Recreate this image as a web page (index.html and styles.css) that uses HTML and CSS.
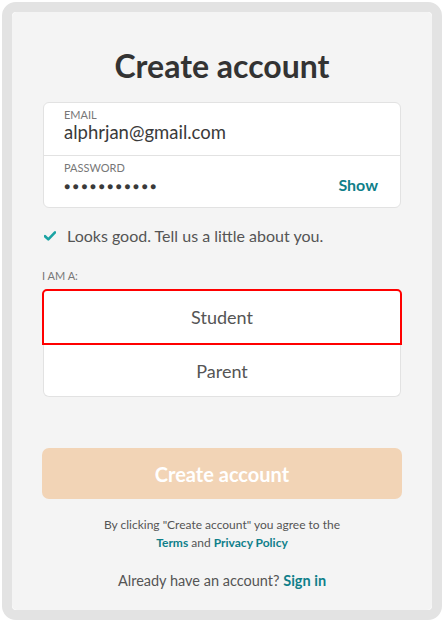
FILE: index.html
```html
<!DOCTYPE html>
<html lang="en">
<head>
    <meta charset="UTF-8">
    <meta name="viewport" content="width=device-width, initial-scale=1.0">
    <title>Create account</title>
    <link rel="stylesheet" href="styles.css">
</head>
<body>

<div class="frame">
    <div class="panel">
        <h1>Create account</h1>

        <div class="fields">
            <div class="field">
                <span class="label">EMAIL</span>
                <span class="value">alphrjan@gmail.com</span>
            </div>
            <div class="field field-pass">
                <div class="pass-col">
                    <span class="label">PASSWORD</span>
                    <span class="value dots">&#9679;&#9679;&#9679;&#9679;&#9679;&#9679;&#9679;&#9679;&#9679;&#9679;&#9679;</span>
                </div>
                <a class="show" href="#">Show</a>
            </div>
        </div>

        <p class="ok">
            <svg width="12" height="10" viewBox="0 0 12 10"><path d="M1 5.2 L4.3 8.4 L11 1.4" fill="none" stroke="#1aa3a3" stroke-width="2.6" stroke-linecap="round" stroke-linejoin="round"/></svg>
            Looks good. Tell us a little about you.
        </p>

        <span class="label role-label">I AM A:</span>
        <div class="roles">
            <button class="role role-active">Student</button>
            <button class="role">Parent</button>
        </div>

        <button class="submit">Create account</button>

        <p class="terms">By clicking "Create account" you agree to the<br>
            <a href="#">Terms</a> and <a href="#">Privacy Policy</a></p>

        <p class="signin">Already have an account? <a href="#">Sign in</a></p>
    </div>
</div>

</body>
</html>
```

FILE: styles.css
```css
body {
    margin: 0;
    background-color: #ffffff;
    font-family: Lato, "Noto Sans", sans-serif;
    color: #333;
}
.frame {
    margin: 2px 0 0 2px;
    width: 420px;
    border: 10px solid #e3e3e3;
    border-radius: 14px;
}
.panel {
    background-color: #f4f4f4;
    border-radius: 5px;
    height: 598px;
    padding: 0 30px;
    display: flex;
    flex-direction: column;
}
h1 {
    margin: 34px 0 0;
    font-size: 32px;
    line-height: 40px;
    font-weight: 700;
    text-align: center;
    color: #333;
}
.fields {
    margin: 16px 1px 0;
    background-color: #fff;
    border: 1px solid #e2e2e2;
    border-radius: 6px;
}
.field {
    height: 52px;
    padding: 0 22px 0 20px;
    display: flex;
    flex-direction: column;
}
.field-pass {
    height: 51px;
    border-top: 1px solid #e2e2e2;
    flex-direction: row;
    justify-content: space-between;
}
.pass-col {
    display: flex;
    flex-direction: column;
}
.label {
    display: block;
    font-size: 11px;
    line-height: 13px;
    color: #777;
    margin-top: 5px;
}
.value {
    font-size: 18.5px;
    line-height: 22px;
    color: #3a3a3a;
}
.dots {
    font-size: 10px;
    letter-spacing: 2.6px;
    line-height: 24px;
}
.show {
    align-self: flex-end;
    font-size: 16px;
    font-weight: 700;
    color: #0f7f8a;
    text-decoration: none;
    margin-bottom: 13px;
}
.ok {
    margin: 18px 0 0 2px;
    font-size: 16px;
    line-height: 20px;
    color: #555;
    display: flex;
    align-items: center;
    gap: 11px;
}
.role-label {
    margin-top: 23px;
}
.roles {
    margin-top: 7px;
    display: flex;
    flex-direction: column;
}
.role {
    height: 52px;
    margin: 0 1px;
    background-color: #fff;
    border: 1px solid #e2e2e2;
    font-family: inherit;
    font-size: 18px;
    color: #555;
}
.role + .role {
    border-top: none;
    border-radius: 0 0 6px 6px;
}
.role-active {
    height: 56px;
    margin: 0;
    border: 2px solid #ff0000;
    border-radius: 5px 5px 0 0;
}
.submit {
    margin-top: 51px;
    height: 51px;
    border: none;
    border-radius: 7px;
    background-color: #f2d4b6;
    color: #fff;
    font-family: inherit;
    font-size: 20px;
    font-weight: 700;
}
.terms {
    margin: 17px 0 0;
    font-size: 12px;
    line-height: 18px;
    text-align: center;
    color: #555;
}
.terms a, .signin a {
    color: #0f7f8a;
    font-weight: 700;
    text-decoration: none;
}
.signin {
    margin: 20px 0 0;
    font-size: 14.5px;
    text-align: center;
    color: #555;
}
```
